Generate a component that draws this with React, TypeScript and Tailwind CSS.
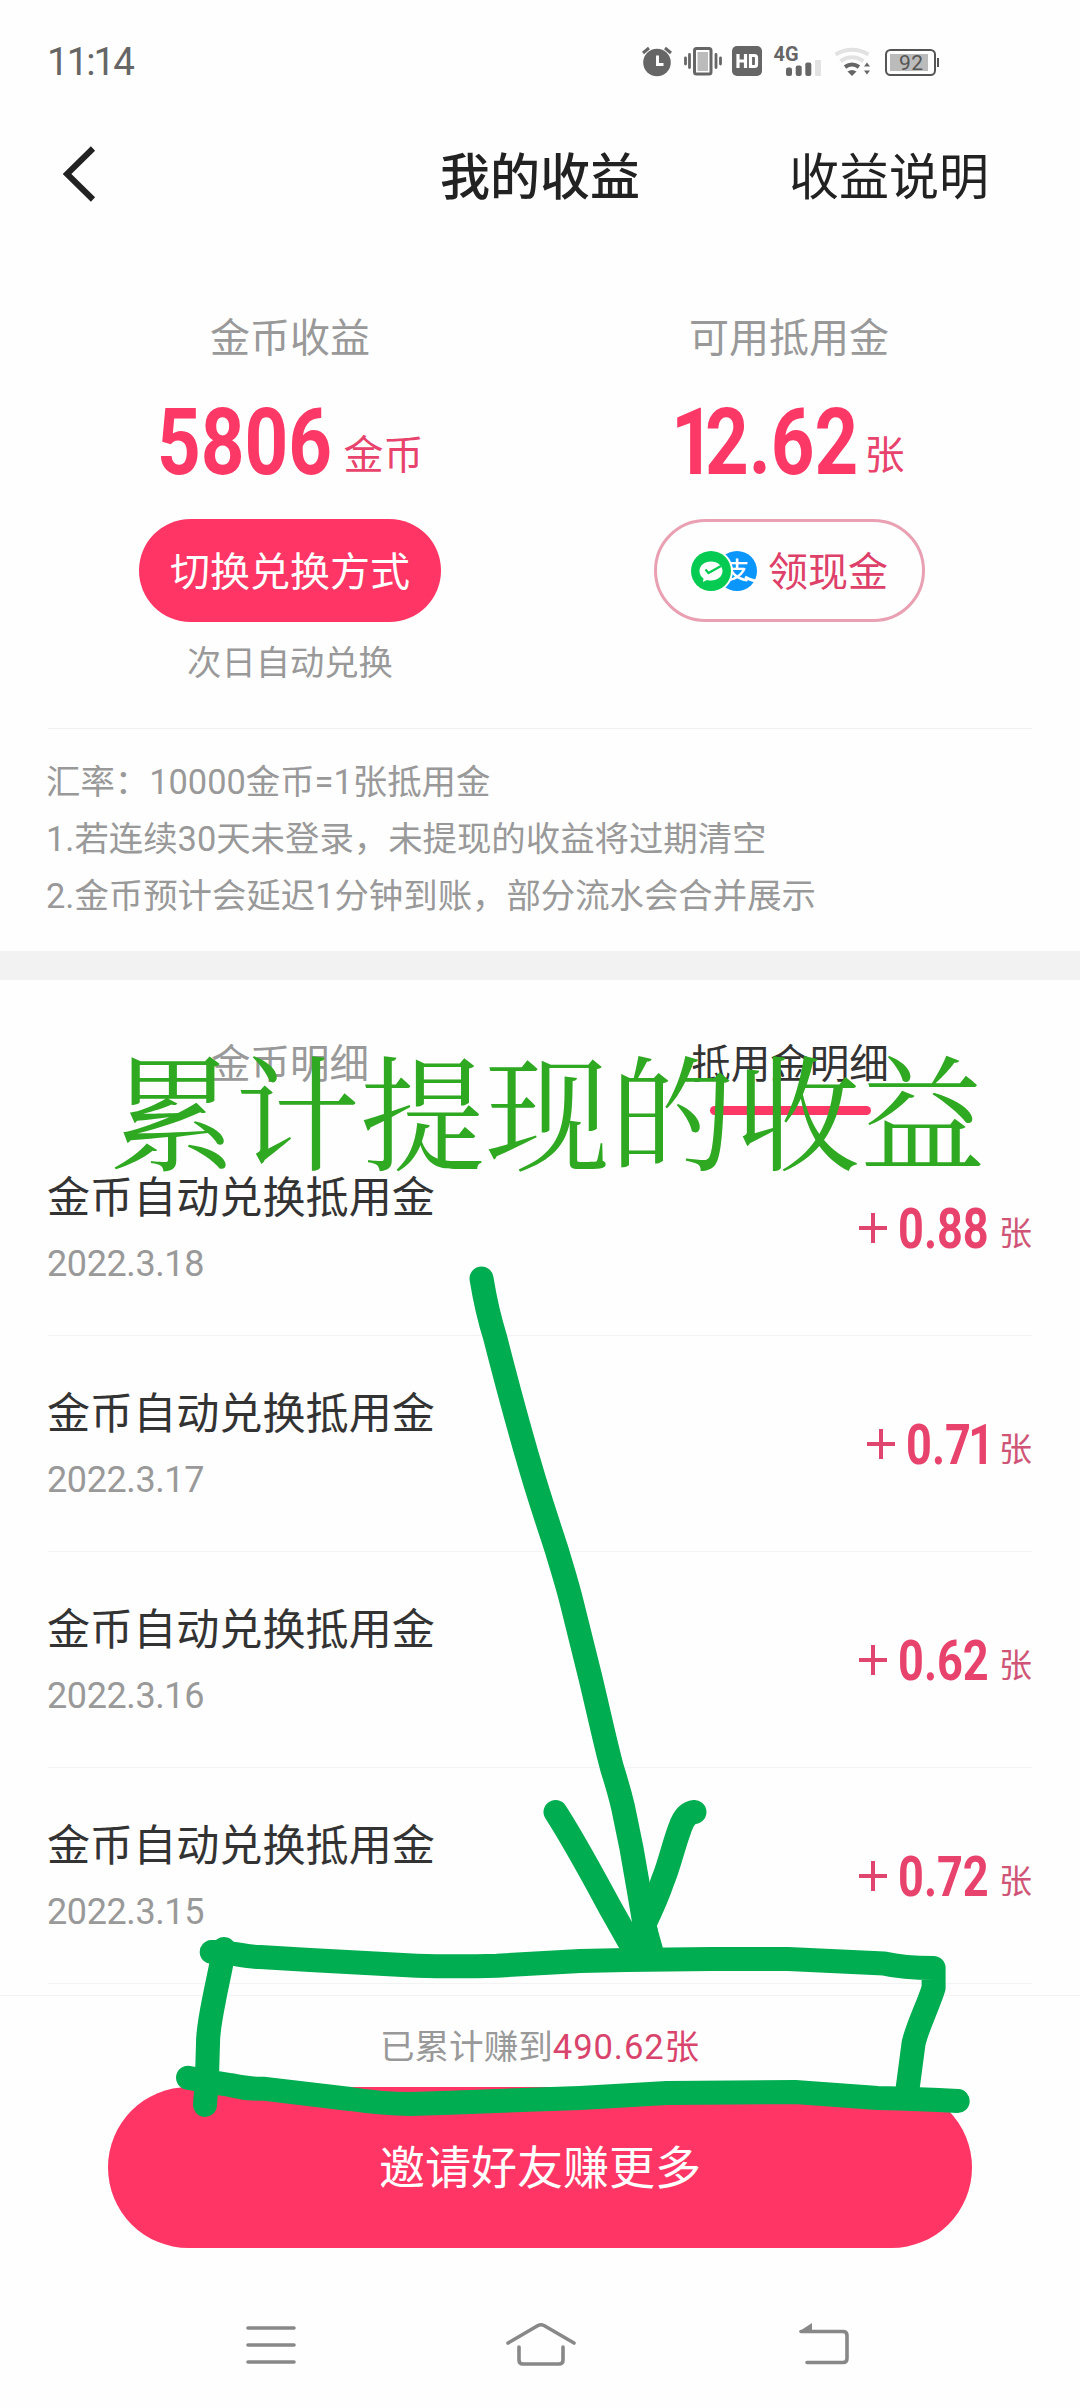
type EarningRecord = {
  date: string;
  amount: string;
  width: string;
};

const records: EarningRecord[] = [
  { date: "2022.3.18", amount: "0.88", width: "w-[92px]" },
  { date: "2022.3.17", amount: "0.71", width: "w-[84px]" },
  { date: "2022.3.16", amount: "0.62", width: "w-[92px]" },
  { date: "2022.3.15", amount: "0.72", width: "w-[92px]" },
];

// Condensed bold figures with a narrow "1"
function Figures({ value }: { value: string }) {
  return (
    <span className="inline-block origin-left scale-x-[.82]">
      {value.split("").map((char, index) => (
        <span
          key={index}
          className={char !== "1" ? "" : index === 0 ? "mx-[-.13em]" : "mx-[-.055em]"}
        >
          {char}
        </span>
      ))}
    </span>
  );
}

function StatusBar() {
  return (
    <div className="flex h-[122px] items-center pl-[47px] text-[#666]">
      <span className="w-[590px] pt-0.5 font-[Roboto,sans-serif] text-[38.500px] leading-none tracking-[-2px]">
        11:14
      </span>

      <svg width="304" height="42" viewBox="637 40 304 42" fill="none">
        {/* alarm */}
        <circle cx="657" cy="62.500" r="13.800" fill="#666" />
        <path d="M643 53l6-5M671 53l-6-5" stroke="#666" strokeWidth="3" />
        <path d="M657.500 55.500v9h6" stroke="#fff" strokeWidth="3" />

        {/* vibrate */}
        <rect x="694.500" y="48.500" width="16.500" height="25.500" rx="2" stroke="#666" strokeWidth="3" />
        <rect x="697.500" y="52" width="10.500" height="19" fill="#bbb" />
        <path
          d="M689.500 54.500v13M716 54.500v13M685.500 58v6M720.500 58v6"
          stroke="#666"
          strokeWidth="2.800"
          strokeLinecap="round"
        />

        {/* HD */}
        <rect x="732" y="46" width="30" height="30" rx="5" fill="#666" />
        <path
          d="M738 54v14M745.500 54v14M738 61h7.500M750.500 55.500h4q2 0 2 2v7q0 2-2 2h-4z"
          stroke="#fff"
          strokeWidth="3.200"
        />

        {/* signal */}
        <text x="773.500" y="61" fontSize="20" fontWeight="700" fill="#666" textLength="25" lengthAdjust="spacingAndGlyphs" fontFamily="Roboto, sans-serif">
          4G
        </text>
        <rect x="786" y="67.500" width="6" height="8.500" rx="2" fill="#666" />
        <rect x="795.700" y="65.500" width="6" height="10.500" rx="2" fill="#666" />
        <rect x="805.300" y="62.500" width="6" height="13.500" rx="2" fill="#666" />
        <rect x="815" y="60" width="6" height="16" rx="1" fill="#e2e2e2" />

        {/* wifi */}
        <path d="M835.500 54.500q16.500-9.500 33 0" stroke="#e2e2e2" strokeWidth="4" />
        <path d="M840.500 61q11.500-7.500 23 0" stroke="#e2e2e2" strokeWidth="4" />
        <path d="M845 67q7-5 14 0" stroke="#666" strokeWidth="4" />
        <path d="M847.500 71.500q4.500-3 9 0l-4.500 4.500z" fill="#666" />
        <path d="M864 66.500h6l-3-4zM864 70.500h6l-3 4z" fill="#666" />

        {/* battery */}
        <rect x="886" y="50" width="49" height="25" rx="4.500" stroke="#555" strokeWidth="2" />
        <rect x="890" y="54" width="38" height="17" fill="#bbb" />
        <path d="M938 58v9" stroke="#555" strokeWidth="2" />
        <text x="899" y="70" fontSize="21" fill="#555" textLength="24" fontFamily="Roboto, sans-serif">
          92
        </text>
      </svg>
    </div>
  );
}

function Header() {
  return (
    <header className="relative flex h-[110px] items-center justify-center text-[50px] leading-none text-[#222]">
      <svg className="absolute top-[24px] left-[60px]" width="40" height="56" viewBox="0 0 40 56" fill="none">
        <path d="M33 2.500L7 28l26 25.500" stroke="#222" strokeWidth="6" />
      </svg>
      <h1 className="pb-2 font-medium">我的收益</h1>
      <span className="absolute right-[91px] pb-2">收益说明</span>
    </header>
  );
}

function PayIcons() {
  return (
    <svg width="68" height="42" viewBox="0 0 68 42" fill="none">
      <circle cx="47" cy="21" r="20" fill="#0a96fa" />
      <text x="35" y="29" fontSize="24" fontWeight="500" fill="#fff" fontFamily="'Noto Sans CJK SC', sans-serif">
        支
      </text>
      <path d="M55 27q5 3 12 4.500" stroke="#fff" strokeWidth="3" />
      <circle cx="21" cy="21" r="22" fill="#fff" />
      <circle cx="21" cy="21" r="20" fill="#06cb52" />
      <path
        d="M21 11.500c-6.500 0-11.500 4-11.500 9.500 0 3 1.500 5.500 4 7.500l-.5 3.500 4-2c1.200.4 2.600.5 4 .5 6.500 0 11.500-4 11.500-9.500S27.500 11.500 21 11.500z"
        fill="#fff"
      />
      <path d="M15.500 19.500l3 3.500L31 16" stroke="#06cb52" strokeWidth="2.200" />
    </svg>
  );
}

function Balances() {
  return (
    <section className="mx-[48px] grid h-[497px] grid-cols-[484px_500px] border-b border-[#f0f0f0] pt-[74px] text-[40px] leading-none">
      <div className="flex flex-col items-center">
        <div className="h-[58px] leading-[58px] text-[#999]">金币收益</div>
        <div className="flex h-[155px] items-baseline gap-[13px] pt-[32px] text-[#e8436c]">
          <span className="w-[174px] font-[Roboto,sans-serif] text-[93px] leading-none font-bold text-[#fc3866]">
            <Figures value="5806" />
          </span>
          <span className="-translate-y-[5px]">金币</span>
        </div>
        <button className="h-[103px] w-[302px] rounded-full bg-[#ff3665] pb-1 text-white">
          切换兑换方式
        </button>
        <div className="h-[72px] text-[34.300px] leading-[76px] text-[#999]">
          次日自动兑换
        </div>
      </div>

      <div className="flex flex-col items-center pl-[14px]">
        <div className="h-[58px] leading-[58px] text-[#999]">可用抵用金</div>
        <div className="flex h-[155px] items-baseline gap-[11px] pt-[32px] text-[#e8436c]">
          <span className="w-[180px] pl-[7px] font-[Roboto,sans-serif] text-[93px] leading-none font-bold text-[#fc3866]">
            <Figures value="12.62" />
          </span>
          <span className="-translate-y-[5px]">张</span>
        </div>
        <button className="flex h-[103px] w-[271px] items-center justify-center gap-[10px] rounded-full border-3 border-[#e8a0b2] text-[#dd4068]">
          <PayIcons />
          <span className="pb-1">领现金</span>
        </button>
      </div>
    </section>
  );
}

function RecordRow({ record }: { record: EarningRecord }) {
  return (
    <li className="flex h-[216px] items-center justify-between border-b border-[#f3f3f3]">
      <div className="-ml-px">
        <div className="h-[68px] text-[43.100px] leading-[68px] text-[#333]">
          金币自动兑换抵用金
        </div>
        <div className="h-[68px] font-[Roboto,sans-serif] text-[36px] leading-[73px] tracking-[-.4px] text-[#999]">
          {record.date}
        </div>
      </div>
      <div className="flex items-baseline pt-[3px] text-[#e8436c]">
        <svg className="mr-[10px] mb-0.5 self-center" width="30" height="30" viewBox="0 0 30 30">
          <path d="M1 15h28M15 0v30" stroke="#e04570" strokeWidth="4" />
        </svg>
        <span className={`${record.width} font-[Roboto,sans-serif] text-[55px] leading-none font-bold`}>
          <Figures value={record.amount} />
        </span>
        <span className="ml-[9px] -translate-y-[3px] text-[33px] leading-none text-[#cf5577]">
          张
        </span>
      </div>
    </li>
  );
}

function NavBar() {
  return (
    <nav className="mt-auto grid h-[126px] grid-cols-[360px_361px_359px] items-center justify-items-center">
      <svg className="ml-[182px]" width="54" height="46" viewBox="0 0 54 46" stroke="#888" strokeWidth="3.600" strokeLinecap="round">
        <path d="M4 6h46M4 23h46M4 40h46" />
      </svg>
      <svg width="74" height="46" viewBox="0 0 74 46" fill="none" stroke="#888" strokeWidth="3.600" strokeLinecap="round" strokeLinejoin="round">
        <path d="M4 21L34 3.500q3-1.500 6 0L70 21" />
        <path d="M15 25v13q0 4 4 4h36q4 0 4-4V25" />
      </svg>
      <svg className="mr-[154px]" width="54" height="46" viewBox="0 0 54 46" fill="none" stroke="#888" strokeWidth="3.600" strokeLinecap="round">
        <path d="M4 9.500h42q4 0 4 4v23q0 4-4 4H10" />
        <path d="M2 9.500L15 1v8.500z" fill="#888" stroke="none" />
      </svg>
    </nav>
  );
}

// Hand-drawn notes lying over the page
function Annotations() {
  return (
    <>
      <div className="absolute top-[1037px] left-[110px] font-['Noto_Serif_CJK_SC','Noto_Serif_SC','AR_PL_UMing_CN','Noto_Sans_CJK_SC',serif] text-[125px] leading-[140px] font-normal whitespace-nowrap text-[#2fa822]">
        累计提现的收益
      </div>
      <svg
        className="absolute top-0 left-0"
        width="1080"
        height="2408"
        viewBox="0 0 1080 2408"
        fill="none"
        stroke="#00ad50"
        strokeWidth="24"
        strokeLinecap="round"
        strokeLinejoin="round"
      >
        <path d="M481.500 1278.500C485 1300 489 1318 495 1337C506 1380 518 1425 530.700 1468C540 1500 548 1523 556.700 1550C562 1568 567 1583 572 1603.500C578 1628 584 1652 590 1676C598 1709 604 1738 612 1768Q619 1790 623 1807C629 1834 634 1860 638.700 1889.500L648 1945" />
        <path d="M555.500 1812C575 1842 594 1878 612 1911L638 1957" />
        <path d="M694.500 1812Q685 1813 680 1828C673 1847 669 1866 663 1880Q657 1898 644 1925L651 1950" />
        <path d="M211.700 1952C228 1951 243 1957 260 1957L310 1960L416.700 1965.700Q456 1967 497 1965.700L580 1961L626 1960L712 1959H788L884 1963.500Q903 1968 933.600 1968V1988C928 2006 918 2025 913.600 2043L907.800 2087" />
        <path d="M188 2077.700Q210 2082 230 2085Q246 2089 263 2088.700L350 2099Q384 2104 410 2104L450 2102.700L580 2098L667 2093L795 2092L877.500 2098Q920 2099 957.700 2101" />
        <path d="M224 1949C221 1968 217 1984 214 2000Q208 2030 208 2043L207 2077L205 2105" />
      </svg>
    </>
  );
}

export default function App() {
  return (
    <main className="relative flex h-[2408px] w-[1080px] flex-col overflow-hidden bg-[#fefefe] font-['Noto_Sans_CJK_SC',sans-serif]">
      <StatusBar />
      <Header />
      <Balances />

      <section className="h-[222px] px-[46px] pt-[25px] font-[Roboto,'Noto_Sans_CJK_SC',sans-serif] text-[34.400px] leading-[57px] text-[#999]">
        <p>汇率：10000金币=1张抵用金</p>
        <p>1.若连续30天未登录，未提现的收益将过期清空</p>
        <p>2.金币预计会延迟1分钟到账，部分流水会合并展示</p>
      </section>

      <div className="h-[29px] bg-[#f2f2f2]" />

      <div className="grid h-[140px] grid-cols-[500px_500px] gap-0 px-[40px] pt-[51px] text-[39.500px] leading-[60px]">
        <div className="text-center text-[#999]">金币明细</div>
        <div className="flex flex-col items-center text-[#333]">
          抵用金明细
          <span className="mt-[15px] h-[9px] w-[161px] rounded-full bg-[#fc3866]" />
        </div>
      </div>

      <ul className="mx-[48px]">
        {records.map((record) => (
          <RecordRow key={record.date} record={record} />
        ))}
      </ul>

      <footer className="mt-[11px] flex flex-col items-center border-t border-[#f3f3f3] pt-[17px]">
        <div className="h-[74px] font-[Roboto,'Noto_Sans_CJK_SC',sans-serif] text-[34.600px] leading-[68px] text-[#999]">
          已累计赚到<span className="tracking-[.9px] text-[#d9446c]">490.62张</span>
        </div>
        <button className="h-[161px] w-[864px] rounded-full bg-[#ff3665] pb-1.5 text-[46px] text-white">
          邀请好友赚更多
        </button>
      </footer>

      <NavBar />
      <Annotations />
    </main>
  );
}
